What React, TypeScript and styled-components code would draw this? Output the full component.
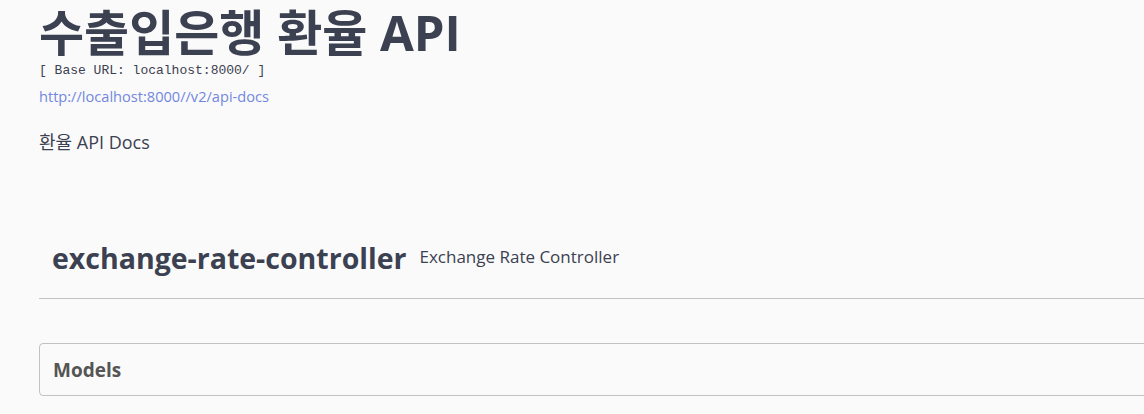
import styled, { createGlobalStyle } from "styled-components";

const GlobalStyle = createGlobalStyle`
  html, body {
    margin: 0;
    padding: 0;
    background: #fafafa;
    overflow: hidden;
  }
  body {
    font-family: "Open Sans", "Noto Sans CJK KR", sans-serif;
    color: #3b4151;
  }
`;

const App = () => {
  return (
    <>
      <GlobalStyle />
      <Wrapper>
        <Info>
          <Title>수출입은행 환율 API</Title>
          <BaseUrl>[ Base URL: localhost:8000/ ]</BaseUrl>
          <DocsLink href="#">http://localhost:8000//v2/api-docs</DocsLink>
          <Description>환율 API Docs</Description>
        </Info>

        <TagSection>
          <TagHeader>
            <TagName>exchange-rate-controller</TagName>
            <TagDescription>Exchange Rate Controller</TagDescription>
          </TagHeader>
        </TagSection>

        <ModelsBox>
          <ModelsTitle>Models</ModelsTitle>
        </ModelsBox>
      </Wrapper>
    </>
  );
};

const Wrapper = styled.div`
  width: 1200px;
  padding: 0 0 0 39px;
  box-sizing: border-box;
`;

const Info = styled.div`
  display: flex;
  flex-direction: column;
  align-items: flex-start;
  padding-top: 2px;
`;

const Title = styled.h2`
  margin: 0;
  font-family: "Open Sans", "Noto Sans CJK KR", sans-serif;
  font-size: 49px;
  font-weight: 700;
  line-height: 60px;
  color: #3b4151;
`;

const BaseUrl = styled.pre`
  margin: 1px 0 0;
  font-family: "Liberation Mono", "Noto Sans CJK KR", monospace;
  font-size: 13px;
  line-height: 16px;
  color: #3b4151;
`;

const DocsLink = styled.a`
  margin-top: 8px;
  font-size: 14.6px;
  line-height: 18px;
  color: #7287e0;
  text-decoration: none;
`;

const Description = styled.p`
  margin: 26px 0 0;
  font-size: 18px;
  line-height: 22px;
  color: #3b4151;
`;

const TagSection = styled.div`
  margin-top: 81px;
`;

const TagHeader = styled.h4`
  margin: 0;
  height: 65px;
  padding: 2px 0 0 13px;
  box-sizing: border-box;
  display: flex;
  align-items: flex-start;
  gap: 13px;
  border-bottom: 1px solid rgba(59, 65, 81, 0.3);
`;

const TagName = styled.span`
  font-size: 28.5px;
  font-weight: 700;
  line-height: 44px;
  color: #3b4151;
`;

const TagDescription = styled.small`
  font-size: 17px;
  font-weight: 400;
  line-height: 42px;
  color: #3b4151;
`;

const ModelsBox = styled.section`
  margin-top: 44px;
  height: 53px;
  box-sizing: border-box;
  border: 1px solid rgba(59, 65, 81, 0.3);
  border-radius: 4px;
  display: flex;
  align-items: center;
  padding: 0 0 0 13px;
`;

const ModelsTitle = styled.h4`
  margin: 0;
  font-size: 19px;
  font-weight: 700;
  color: #555555;
`;

export default App;
